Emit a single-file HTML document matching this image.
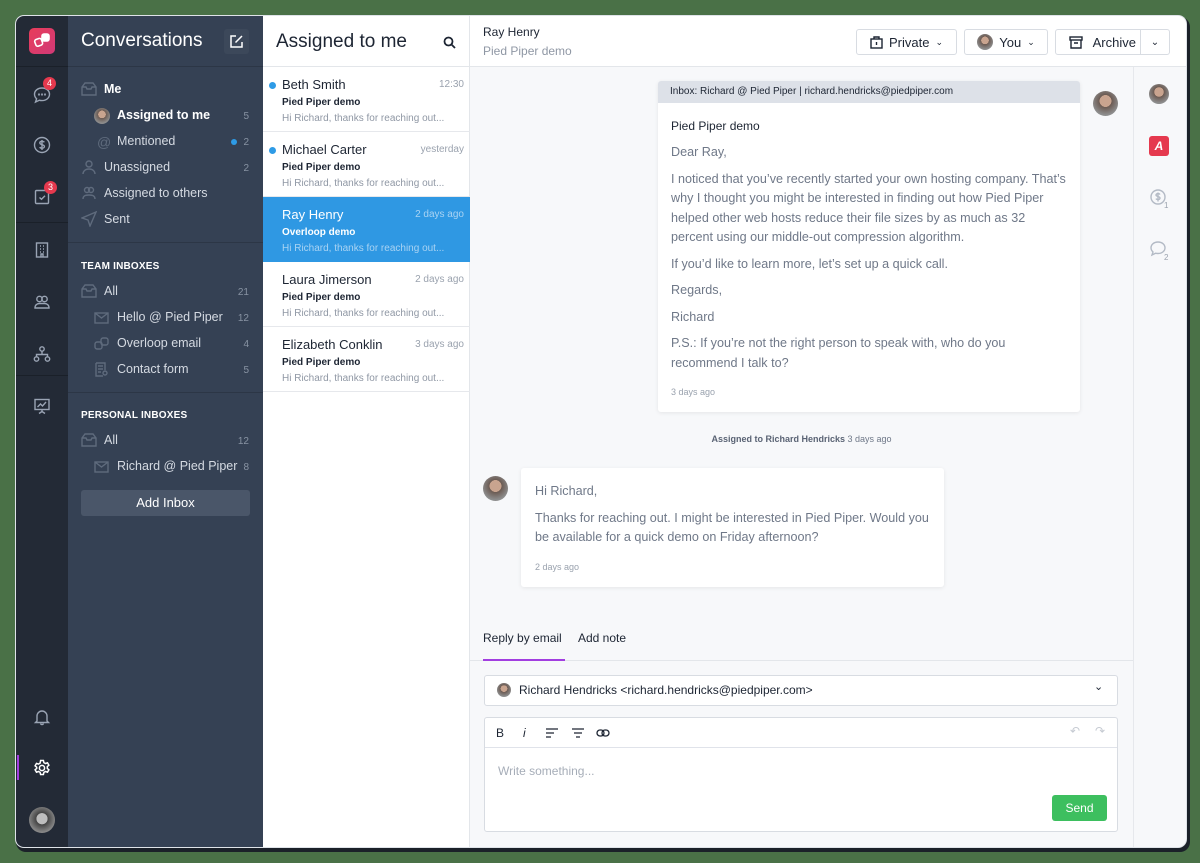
<!DOCTYPE html>
<html><head><meta charset="utf-8"><style>
*{box-sizing:border-box;margin:0;padding:0}
body{width:1200px;height:863px;background:#4a7147;font-family:"Liberation Sans",sans-serif;position:relative;overflow:hidden}
.win{position:absolute;left:16px;top:16px;width:1170px;height:831px;border-radius:8px;overflow:hidden;background:#f7f8fa;box-shadow:0 0 0 1px #dfe3e8,2px 3px 0 2px #1b2129}
.a{position:absolute}
.rail{left:0;top:0;width:52px;height:100%;background:#232a36}
.side{left:52px;top:0;width:195px;height:100%;background:#354154}
.list{left:247px;top:0;width:207px;height:100%;background:#fff;border-right:1px solid #e3e6ea}
.main{left:454px;top:0;width:716px;height:100%}
.rr{left:1117px;top:51px;width:53px;height:780px;background:#f7f8fa;border-left:1px solid #e6e8ec}
.nav{color:#d5dae2;font-size:12.5px;position:absolute;left:0}
.cnt{position:absolute;right:14px;font-size:10px;color:#8893a3}
.sec{color:#fff;font-size:10px;font-weight:bold;letter-spacing:.2px;position:absolute;left:13px}
.ic{position:absolute;stroke:#9aa4b4;fill:none;stroke-width:1.4}
.item{position:absolute;left:0;width:207px;height:65px;border-bottom:1px solid #e6e8ec}
.item .n{position:absolute;left:19px;top:10px;font-size:13px;color:#1d2533}
.item .t{position:absolute;right:6px;top:12px;font-size:10px;color:#9aa2ae}
.item .s{position:absolute;left:19px;top:30px;font-size:10px;color:#1d2533;font-weight:bold}
.item .p{position:absolute;left:19px;top:46px;font-size:10px;color:#8f97a4}
.dot{position:absolute;left:6px;top:15px;width:7px;height:7px;border-radius:50%;background:#2e9be6}
.btn{position:absolute;top:13px;height:26px;border:1px solid #d8dce2;border-radius:3px;background:#fff;font-size:13px;color:#1d2533;display:flex;align-items:center;justify-content:center;gap:6px}
.av{border-radius:50%;background:radial-gradient(circle at 50% 40%,#c9a48f 0 30%,#6b5a52 31%,#8d8d8d 70%)}
</style></head><body>
<div class="win">
 <div class="a rail">
  <div class="a" style="left:13px;top:12px;width:26px;height:26px;border-radius:5px;background:linear-gradient(135deg,#e83c5a,#d13a77)"></div>
  <svg class="a" style="left:16px;top:15px" width="20" height="20" viewBox="0 0 20 20" fill="none" stroke="#fff" stroke-width="1.6"><rect x="3" y="8" width="7" height="7" rx="2" transform="rotate(-20 6 11)"/><rect x="10" y="3" width="7" height="7" rx="2" fill="#fff"/></svg>
  <div class="a" style="left:0;top:50px;width:52px;height:1px;background:#1a2029"></div>
  <svg class="ic" style="left:16px;top:69px" width="20" height="20" viewBox="0 0 20 20"><path d="M10 3c4.4 0 7.5 2.8 7.5 6.3S14.4 15.6 10 15.6c-1 0-1.9-.1-2.700-.4L3.5 17l1.1-3.2C3.3 12.6 2.5 11 2.5 9.3 2.5 5.8 5.6 3 10 3z"/><circle cx="7" cy="9.5" r=".4"/><circle cx="10" cy="9.5" r=".4"/><circle cx="13" cy="9.5" r=".4"/></svg>
  <div class="a" style="left:27px;top:61px;width:13px;height:13px;border-radius:50%;background:#e5394e;color:#fff;font-size:9px;text-align:center;line-height:13px">4</div>
  <svg class="ic" style="left:16px;top:119px" width="20" height="20" viewBox="0 0 20 20"><circle cx="10" cy="10" r="7.5"/><path d="M12.3 7.3c-.4-.7-1.3-1-2.3-1-1.3 0-2.2.6-2.2 1.6 0 2.3 4.6 1.2 4.6 3.6 0 1-1 1.7-2.4 1.700-1 0-1.900-.4-2.300-1.1M10 5v10"/></svg>
  <svg class="ic" style="left:16px;top:171px" width="20" height="20" viewBox="0 0 20 20"><rect x="3.5" y="3.5" width="13" height="13" rx="1"/><path d="M7.5 10.5l2 1.8 3.5-3.5"/></svg>
  <div class="a" style="left:28px;top:165px;width:13px;height:13px;border-radius:50%;background:#e5394e;color:#fff;font-size:9px;text-align:center;line-height:13px">3</div>
  <div class="a" style="left:0;top:206px;width:52px;height:1px;background:#1a2029"></div>
  <svg class="ic" style="left:16px;top:224px" width="20" height="20" viewBox="0 0 20 20"><rect x="4.5" y="3" width="11" height="14"/><path d="M8 6h1M11 6h1M8 9h1M11 9h1M8 12h1M11 12h1M9 17v-3h2v3"/></svg>
  <svg class="ic" style="left:16px;top:276px" width="20" height="20" viewBox="0 0 20 20"><circle cx="7.5" cy="7" r="2.7"/><circle cx="12.5" cy="7" r="2.7"/><path d="M3 16c0-3 2-4.5 4.5-4.5h5C15 11.5 17 13 17 16z"/></svg>
  <svg class="ic" style="left:16px;top:328px" width="20" height="20" viewBox="0 0 20 20"><circle cx="10" cy="5" r="2.2"/><circle cx="4.5" cy="15" r="2.2"/><circle cx="15.5" cy="15" r="2.2"/><path d="M10 7.2v3M4.5 12.8V10.5h11v2.3"/></svg>
  <div class="a" style="left:0;top:359px;width:52px;height:1px;background:#1a2029"></div>
  <svg class="ic" style="left:16px;top:380px" width="20" height="20" viewBox="0 0 20 20"><rect x="3" y="3.5" width="14" height="10"/><path d="M5.5 11l3-3 2 2 3.5-4M10 13.5V16M7 17.5l3-2 3 2"/></svg>
  <svg class="ic" style="left:16px;top:691px" width="20" height="20" viewBox="0 0 20 20"><path d="M5 14V9a5 5 0 0110 0v5l1.5 1.5h-13zM8.5 16.5a1.6 1.6 0 003 0"/></svg>
  <div class="a" style="left:1px;top:739px;width:2px;height:25px;background:#a23ee0"></div>
  <svg class="a" style="left:16px;top:742px" width="20" height="20" viewBox="0 0 20 20" fill="none" stroke="#fff" stroke-width="1.5"><circle cx="10" cy="10" r="2.6"/><path d="M8.6 2.5h2.8l.5 2.1 1.6.9 2-.7 1.4 2.4-1.6 1.4v1.8l1.6 1.4-1.4 2.4-2-.7-1.6.9-.5 2.1H8.6l-.5-2.1-1.6-.9-2 .7-1.4-2.4 1.6-1.4V9.2L3.1 7.8l1.4-2.4 2 .7 1.6-.9z"/></svg>
  <div class="a av" style="left:13px;top:791px;width:26px;height:26px;background:radial-gradient(circle at 50% 45%,#bdbdbd 0 28%,#444 30%,#888 70%)"></div>
 </div>
 <div class="a side">
  <div class="a" style="left:13px;top:14px;font-size:19px;color:#fff">Conversations</div>
  <div class="a" style="left:156px;top:13px;width:25px;height:25px;border-radius:3px;background:#3c485a"></div>
  <svg class="a" style="left:161px;top:18px" width="15" height="15" viewBox="0 0 15 15" fill="none" stroke="#fff" stroke-width="1.5"><path d="M7 2H2v11h11V8M6.5 8.5L13 2"/></svg>
  <div class="a" style="left:0;top:50px;width:195px;height:1px;background:#2c3646"></div>
  <svg class="ic" style="left:13px;top:66px;stroke:#5f6b7d" width="16" height="14" viewBox="0 0 16 14"><path d="M1 5l3-4h8l3 4v8H1zM1 5h4l1 2h4l1-2h4"/></svg>
  <div class="nav" style="left:36px;top:66px;color:#fff;font-weight:bold">Me</div>
  <div class="a av" style="left:26px;top:92px;width:16px;height:16px"></div>
  <div class="nav" style="left:49px;top:92px;color:#fff;font-weight:bold">Assigned to me</div><div class="cnt" style="top:95px">5</div>
  <div class="nav" style="left:29px;top:118px;color:#5f6b7d;font-size:14px">@</div>
  <div class="nav" style="left:49px;top:118px">Mentioned</div><div class="a" style="left:163px;top:123px;width:6px;height:6px;border-radius:50%;background:#2e9be6"></div><div class="cnt" style="top:121px">2</div>
  <svg class="ic" style="left:13px;top:143px;stroke:#5f6b7d" width="16" height="16" viewBox="0 0 16 16"><circle cx="8" cy="5" r="3"/><path d="M2 15c0-3 2.5-5 6-5s6 2 6 5"/></svg>
  <div class="nav" style="left:36px;top:144px">Unassigned</div><div class="cnt" style="top:147px">2</div>
  <svg class="ic" style="left:13px;top:169px;stroke:#5f6b7d" width="16" height="16" viewBox="0 0 16 16"><circle cx="6" cy="5" r="2.5"/><circle cx="10" cy="5" r="2.5"/><path d="M2 14c0-3 2-4 6-4s6 1 6 4"/></svg>
  <div class="nav" style="left:36px;top:170px">Assigned to others</div>
  <svg class="ic" style="left:13px;top:195px;stroke:#5f6b7d" width="16" height="16" viewBox="0 0 16 16"><path d="M15 1L1 7l6 2 2 6z"/></svg>
  <div class="nav" style="left:36px;top:196px">Sent</div>
  <div class="a" style="left:0;top:226px;width:195px;height:1px;background:#2c3646"></div>
  <div class="sec" style="top:245px">TEAM INBOXES</div>
  <svg class="ic" style="left:13px;top:268px;stroke:#5f6b7d" width="16" height="14" viewBox="0 0 16 14"><path d="M1 5l3-4h8l3 4v8H1zM1 5h4l1 2h4l1-2h4"/></svg>
  <div class="nav" style="left:36px;top:268px">All</div><div class="cnt" style="top:271px">21</div>
  <svg class="ic" style="left:26px;top:296px;stroke:#5f6b7d" width="15" height="12" viewBox="0 0 15 12"><rect x="1" y="1" width="13" height="10"/><path d="M1 1l6.5 5L14 1"/></svg>
  <div class="nav" style="left:49px;top:294px">Hello @ Pied Piper</div><div class="cnt" style="top:297px">12</div>
  <svg class="ic" style="left:26px;top:320px;stroke:#5f6b7d" width="15" height="15" viewBox="0 0 15 15"><rect x="1" y="6" width="7" height="7" rx="2"/><rect x="7" y="2" width="7" height="7" rx="2"/></svg>
  <div class="nav" style="left:49px;top:320px">Overloop email</div><div class="cnt" style="top:323px">4</div>
  <svg class="ic" style="left:26px;top:346px;stroke:#5f6b7d" width="15" height="15" viewBox="0 0 15 15"><path d="M2 1h9v7M2 1v13h7M4 4h5M4 7h5M4 10h3"/><circle cx="11" cy="11" r="2"/></svg>
  <div class="nav" style="left:49px;top:346px">Contact form</div><div class="cnt" style="top:349px">5</div>
  <div class="a" style="left:0;top:376px;width:195px;height:1px;background:#2c3646"></div>
  <div class="sec" style="top:394px">PERSONAL INBOXES</div>
  <svg class="ic" style="left:13px;top:417px;stroke:#5f6b7d" width="16" height="14" viewBox="0 0 16 14"><path d="M1 5l3-4h8l3 4v8H1zM1 5h4l1 2h4l1-2h4"/></svg>
  <div class="nav" style="left:36px;top:417px">All</div><div class="cnt" style="top:420px">12</div>
  <svg class="ic" style="left:26px;top:445px;stroke:#5f6b7d" width="15" height="12" viewBox="0 0 15 12"><rect x="1" y="1" width="13" height="10"/><path d="M1 1l6.5 5L14 1"/></svg>
  <div class="nav" style="left:49px;top:443px">Richard @ Pied Piper</div><div class="cnt" style="top:446px">8</div>
  <div class="a" style="left:13px;top:474px;width:169px;height:26px;border-radius:3px;background:#4a5669;color:#fff;font-size:13px;text-align:center;line-height:26px">Add Inbox</div>
 </div>
 <div class="a list">
  <div class="a" style="left:13px;top:15px;font-size:19px;color:#1d2533">Assigned to me</div>
  <svg class="a" style="left:180px;top:20px" width="13" height="13" viewBox="0 0 13 13" fill="none" stroke="#1d2533" stroke-width="1.8"><circle cx="5.5" cy="5.5" r="4"/><path d="M8.5 8.5L12 12"/></svg>
  <div class="a" style="left:0;top:50px;width:207px;height:1px;background:#e3e6ea"></div>
  <div class="item" style="top:51px"><div class="dot"></div><div class="n">Beth Smith</div><div class="t">12:30</div><div class="s">Pied Piper demo</div><div class="p">Hi Richard, thanks for reaching out...</div></div>
  <div class="item" style="top:116px"><div class="dot"></div><div class="n">Michael Carter</div><div class="t">yesterday</div><div class="s">Pied Piper demo</div><div class="p">Hi Richard, thanks for reaching out...</div></div>
  <div class="item" style="top:181px;background:#2f98e3;border:0"><div class="n" style="color:#fff">Ray Henry</div><div class="t" style="color:#a9d3f3">2 days ago</div><div class="s" style="color:#fff">Overloop demo</div><div class="p" style="color:#a9d3f3">Hi Richard, thanks for reaching out...</div></div>
  <div class="item" style="top:246px"><div class="n">Laura Jimerson</div><div class="t">2 days ago</div><div class="s">Pied Piper demo</div><div class="p">Hi Richard, thanks for reaching out...</div></div>
  <div class="item" style="top:311px"><div class="n">Elizabeth Conklin</div><div class="t">3 days ago</div><div class="s">Pied Piper demo</div><div class="p">Hi Richard, thanks for reaching out...</div></div>
 </div>
 <div class="a main">
  <div class="a" style="left:0;top:0;width:716px;height:51px;background:#fff;border-bottom:1px solid #e3e6ea"></div>
  <div class="a" style="left:13px;top:9px;font-size:12px;color:#1d2533">Ray Henry</div>
  <div class="a" style="left:13px;top:28px;font-size:12px;color:#8f97a4">Pied Piper demo</div>
  <div class="btn" style="left:386px;width:101px"><svg width="13" height="14" viewBox="0 0 13 14" fill="none" stroke="#1d2533" stroke-width="1.4"><rect x="1" y="4" width="11" height="9"/><path d="M4 4V2h5v2M6.5 7v3"/></svg>Private <span style="font-size:9px">&#8964;</span></div>
  <div class="btn" style="left:494px;width:84px"><span class="av" style="width:16px;height:16px;display:inline-block"></span>You <span style="font-size:9px">&#8964;</span></div>
  <div class="btn" style="left:585px;width:86px;justify-content:flex-start;padding-left:13px;border-radius:3px 0 0 3px"><svg width="14" height="13" viewBox="0 0 14 13" fill="none" stroke="#1d2533" stroke-width="1.4"><rect x="1" y="1" width="12" height="3"/><path d="M2 4v8h10V4M5 7h4"/></svg>&nbsp;Archive</div>
  <div class="btn" style="left:670px;width:30px;border-radius:0 3px 3px 0;font-size:10px">&#8964;</div>
  <div class="a" style="left:188px;top:65px;width:422px;height:331px;background:#fff;border-radius:3px;box-shadow:0 1px 4px rgba(0,0,0,.08)">
   <div style="height:22px;background:#dde1e8;border-radius:3px 3px 0 0;font-size:10px;color:#1d2533;padding:5px 12px">Inbox: Richard @ Pied Piper | richard.hendricks@piedpiper.com</div>
   <div style="padding:16px 13px 0;font-size:12px;color:#1d2533">Pied Piper demo</div>
   <div style="padding:10px 13px 0;font-size:12.6px;line-height:19.5px;color:#6f7888">
    <p style="margin-bottom:7px">Dear Ray,</p>
    <p style="margin-bottom:7px">I noticed that you’ve recently started your own hosting company. That’s why I thought you might be interested in finding out how Pied Piper helped other web hosts reduce their file sizes by as much as 32 percent using our middle-out compression algorithm.</p>
    <p style="margin-bottom:7px">If you’d like to learn more, let’s set up a quick call.</p>
    <p style="margin-bottom:7px">Regards,</p>
    <p style="margin-bottom:7px">Richard</p>
    <p>P.S.: If you’re not the right person to speak with, who do you recommend I talk to?</p>
    <div style="font-size:9px;color:#9aa2ae;margin-top:10px">3 days ago</div>
   </div>
  </div>
  <div class="a av" style="left:623px;top:75px;width:25px;height:25px"></div>
  <div class="a" style="left:0;top:418px;width:663px;text-align:center;font-size:9px;color:#6f7888"><b style="color:#5a6374">Assigned to Richard Hendricks</b> 3 days ago</div>
  <div class="a av" style="left:13px;top:460px;width:25px;height:25px"></div>
  <div class="a" style="left:51px;top:452px;width:423px;height:119px;background:#fff;border-radius:3px;box-shadow:0 1px 4px rgba(0,0,0,.08);padding:14px 14px;font-size:12.6px;line-height:19.5px;color:#6f7888">
   <p style="margin-bottom:7px">Hi Richard,</p>
   <p>Thanks for reaching out. I might be interested in Pied Piper. Would you be available for a quick demo on Friday afternoon?</p>
   <div style="font-size:9px;color:#9aa2ae;margin-top:10px">2 days ago</div>
  </div>
  <div class="a" style="left:13px;top:615px;font-size:12px;color:#1d2533">Reply by email</div>
  <div class="a" style="left:108px;top:615px;font-size:12px;color:#1d2533">Add note</div>
  <div class="a" style="left:0;top:644px;width:663px;height:1px;background:#e3e6ea"></div>
  <div class="a" style="left:13px;top:643px;width:82px;height:2px;background:#a23ee0"></div>
  <div class="a" style="left:14px;top:659px;width:634px;height:31px;background:#fff;border:1px solid #d8dce2;border-radius:3px"></div>
  <div class="a av" style="left:27px;top:667px;width:14px;height:14px"></div>
  <div class="a" style="left:49px;top:667px;font-size:12px;color:#1d2533">Richard Hendricks &lt;richard.hendricks@piedpiper.com&gt;</div>
  <div class="a" style="left:624px;top:664px;font-size:11px;color:#1d2533">&#8964;</div>
  <div class="a" style="left:14px;top:701px;width:634px;height:115px;background:#fff;border:1px solid #d8dce2;border-radius:3px">
   <div style="height:30px;border-bottom:1px solid #e0e3ea;position:relative;font-size:12px;color:#1d2533">
    <span class="a" style="left:11px;top:8px">B</span><span class="a" style="left:38px;top:8px;font-style:italic">i</span>
    <svg class="a" style="left:60px;top:10px" width="14" height="10" viewBox="0 0 14 10" stroke="#1d2533" stroke-width="1.3"><path d="M1 1h12M1 5h8M1 9h5"/></svg>
    <svg class="a" style="left:86px;top:10px" width="14" height="10" viewBox="0 0 14 10" stroke="#1d2533" stroke-width="1.3"><path d="M1 1h12M3 5h8M5 9h4"/></svg>
    <svg class="a" style="left:111px;top:10px" width="14" height="10" viewBox="0 0 14 10" fill="none" stroke="#1d2533" stroke-width="1.3"><rect x="1" y="2" width="7" height="6" rx="3"/><rect x="6" y="2" width="7" height="6" rx="3"/></svg>
    <span class="a" style="left:585px;top:6px;color:#c5cad2">&#8630;</span><span class="a" style="left:610px;top:6px;color:#c5cad2">&#8631;</span>
   </div>
   <div class="a" style="left:13px;top:46px;font-size:12px;color:#a6adb8">Write something...</div>
   <div class="a" style="left:567px;top:77px;width:55px;height:26px;background:#3dbf5f;border-radius:3px;color:#fff;font-size:12px;text-align:center;line-height:26px">Send</div>
  </div>
 </div>
 <div class="a rr">
  <div class="a av" style="left:15px;top:17px;width:20px;height:20px"></div>
  <div class="a" style="left:15px;top:69px;width:20px;height:20px;border-radius:3px;background:#e5394e;color:#fff;font-weight:bold;font-style:italic;font-size:12px;text-align:center;line-height:20px">A</div>
  <svg class="ic" style="left:15px;top:121px;stroke:#b3bac5" width="22" height="22" viewBox="0 0 22 22"><circle cx="9" cy="9" r="7"/><path d="M11 6.5c-.4-.6-1.1-.9-2-.9-1.1 0-2 .6-2 1.4 0 2 4 1 4 3.1 0 .9-.9 1.5-2 1.5-.9 0-1.7-.4-2-1M9 4.5v9"/></svg>
  <div class="a" style="left:30px;top:134px;font-size:8px;color:#9aa2ae">1</div>
  <svg class="ic" style="left:15px;top:173px;stroke:#b3bac5" width="22" height="22" viewBox="0 0 22 22"><path d="M9 2c4 0 7 2.5 7 5.8S13 13.5 9 13.5c-.9 0-1.7-.1-2.4-.3L3 15l1-3C2.8 10.9 2 9.5 2 7.8 2 4.5 5 2 9 2z"/></svg>
  <div class="a" style="left:30px;top:186px;font-size:8px;color:#9aa2ae">2</div>
 </div>
</div>
</body></html>
